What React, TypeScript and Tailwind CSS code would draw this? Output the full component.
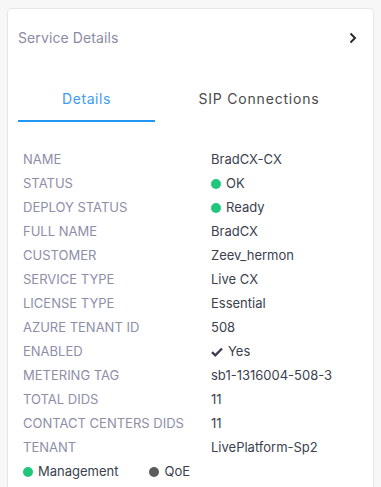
import React from "react";

const rows: { label: string; value: React.ReactNode }[] = [
  { label: "NAME", value: "BradCX-CX" },
  { label: "STATUS", value: "ok" },
  { label: "DEPLOY STATUS", value: "ready" },
  { label: "FULL NAME", value: "BradCX" },
  { label: "CUSTOMER", value: "Zeev_hermon" },
  { label: "SERVICE TYPE", value: "Live CX" },
  { label: "LICENSE TYPE", value: "Essential" },
  { label: "AZURE TENANT ID", value: "508" },
  { label: "ENABLED", value: "yes" },
  { label: "METERING TAG", value: "sb1-1316004-508-3" },
  { label: "TOTAL DIDS", value: "11" },
  { label: "CONTACT CENTERS DIDS", value: "11" },
  { label: "TENANT", value: "LivePlatform-Sp2" },
];

function Value({ v }: { v: React.ReactNode }) {
  if (v === "ok" || v === "ready") {
    return (
      <span className="flex items-center gap-[5px]">
        <span className="w-[10px] h-[10px] rounded-full bg-[#20c77a] inline-block" />
        {v === "ok" ? "OK" : "Ready"}
      </span>
    );
  }
  if (v === "yes") {
    return (
      <span className="flex items-center gap-[5px]">
        <svg width="12" height="10" viewBox="0 0 12 10">
          <path d="M1 5.2 L4.3 8.3 L11 1.5" fill="none" stroke="#3b4150" strokeWidth="2.4" />
        </svg>
        Yes
      </span>
    );
  }
  return <span>{v}</span>;
}

export default function App() {
  return (
    <div
      className="w-[381px] h-[487px] overflow-hidden bg-[#f7f7f7] pl-[7px] pt-[8px]"
      style={{ fontFamily: "Inter, 'Noto Sans', sans-serif" }}
    >
      <div className="w-[367px] h-[600px] bg-white border border-[#e6e6e6] rounded-[4px] px-[10px]">
        <div className="flex items-center justify-between h-[57px]">
          <span className="text-[14px] tracking-[0.1px] text-[#8b8ba3]">Service Details</span>
          <svg width="10" height="12" viewBox="0 0 10 12" className="mr-[5px]">
            <path d="M2.5 1.5 L7 6 L2.5 10.5" fill="none" stroke="#2b2b2b" strokeWidth="2" />
          </svg>
        </div>
        <div className="flex mt-[12px] h-[44px]">
          <div className="w-[137px] flex flex-col">
            <div className="flex-1 flex items-center justify-center text-[14px] tracking-[0.6px] text-[#3d9bf2] pb-[1px]">
              Details
            </div>
            <div className="h-[2px] bg-[#2196f3]" />
          </div>
          <div className="w-[208px] flex items-center justify-center text-[14px] tracking-[0.8px] text-[#4a4a4a] pb-[3px]">
            SIP Connections
          </div>
        </div>
        <div className="pl-[5px] pt-[26px]">
          {rows.map((r) => (
            <div key={r.label} className="flex h-[24px] items-center text-[13px]">
              <div className="w-[188px] text-[#8e8ea8]">{r.label}</div>
              <div className="text-[#3b3f4e]">
                <Value v={r.value} />
              </div>
            </div>
          ))}
          <div className="flex h-[24px] items-center text-[13px] text-[#3b3f4e]">
            <span className="w-[10px] h-[10px] rounded-full bg-[#20c77a] inline-block mr-[5px]" />
            <span className="mr-[31px]">Management</span>
            <span className="w-[10px] h-[10px] rounded-full bg-[#5c5c5c] inline-block mr-[5px]" />
            <span>QoE</span>
          </div>
        </div>
      </div>
    </div>
  );
}
